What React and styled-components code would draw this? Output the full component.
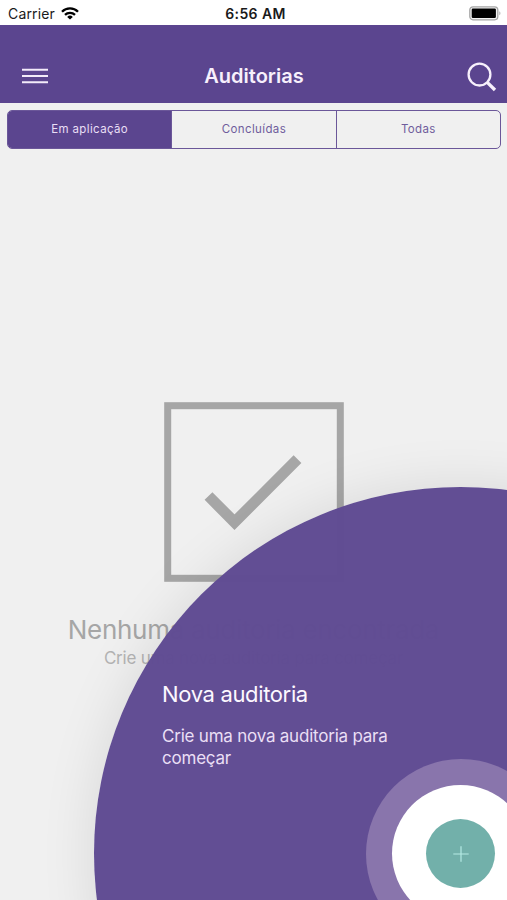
import React from 'react';
import styled, { createGlobalStyle } from 'styled-components';

const GlobalStyle = createGlobalStyle`
  * {
    box-sizing: border-box;
  }
  body {
    margin: 0;
    background-color: #f0f0f0;
    font-family: Inter, "Liberation Sans", sans-serif;
  }
`;

const Screen = styled.div`
  position: relative;
  display: flex;
  flex-direction: column;
  width: 507px;
  height: 900px;
  overflow: hidden;
  background-color: #f0f0f0;
`;

const StatusBar = styled.div`
  display: grid;
  grid-template-columns: 1fr auto 1fr;
  align-items: center;
  height: 25px;
  padding: 2px 6px 0 8px;
  background-color: #ffffff;
  color: #1a1a1a;
  font-size: 14px;
`;

const Carrier = styled.div`
  display: flex;
  align-items: center;
  gap: 6px;
  letter-spacing: 0.15px;
`;

const Time = styled.div`
  padding-left: 2px;
  font-weight: 600;
  letter-spacing: 0.4px;
`;

const Battery = styled.svg`
  justify-self: end;
`;

const Header = styled.header`
  display: grid;
  grid-template-columns: 1fr auto 1fr;
  align-items: center;
  height: 78px;
  padding: 24px 10px 0 11px;
  background-color: #5b458f;
`;

const IconButton = styled.button`
  display: flex;
  justify-self: ${({ $end }) => ($end ? 'end' : 'start')};
  padding: ${({ $end }) => ($end ? '1px 0 0' : '0 0 0 11px')};
  border: none;
  background: none;
`;

const Title = styled.h1`
  margin: 0;
  color: #f7f0fc;
  font-size: 20px;
  font-weight: 600;
  letter-spacing: 0;
`;

const Tabs = styled.div`
  display: flex;
  flex-shrink: 0;
  height: 39px;
  margin: 7px 6px 0 7px;
  border: 1px solid #6b5799;
  border-radius: 5px;
  overflow: hidden;
`;

const Tab = styled.button`
  flex: 1;
  padding: 0 0 2px;
  border: none;
  border-left: ${({ $first }) => ($first ? 'none' : '1px solid #6b5799')};
  background-color: ${({ $active }) => ($active ? '#5b458f' : 'transparent')};
  color: ${({ $active }) => ($active ? '#e9dff5' : '#6f5d9c')};
  font-family: inherit;
  font-size: 11.5px;
  letter-spacing: 0.37px;
`;

const EmptyState = styled.main`
  display: flex;
  flex-direction: column;
  align-items: center;
  padding-top: 253px;
`;

const EmptyTitle = styled.h2`
  margin: 31px 0 0;
  color: #a6a6a6;
  font-size: 26px;
  font-weight: 400;
  line-height: 34px;
  letter-spacing: -0.3px;
  white-space: nowrap;
`;

const EmptyText = styled.p`
  margin: 1px 0 0;
  color: #b4b4b4;
  font-size: 17px;
  line-height: 21px;
  letter-spacing: -0.22px;
  white-space: nowrap;
`;

const Spotlight = styled.section`
  position: absolute;
  top: 487px;
  left: 94px;
  display: grid;
  place-items: center;
  width: 733px;
  height: 733px;
  border-radius: 50%;
  background-color: rgba(96, 75, 146, 0.985);
  box-shadow: 0 0 55px rgba(0, 0, 0, 0.1);
`;

const SpotlightContent = styled.div`
  position: absolute;
  top: 193px;
  left: 68px;
  width: 250px;
`;

const SpotlightTitle = styled.h3`
  margin: 0;
  color: #fdf8ff;
  font-size: 22px;
  font-weight: 400;
  line-height: 29px;
  letter-spacing: -0.35px;
`;

const SpotlightText = styled.p`
  margin: 16px 0 0;
  color: #eadff5;
  font-size: 17px;
  line-height: 22px;
  letter-spacing: -0.22px;
`;

const Pulse = styled.div`
  display: grid;
  place-items: center;
  width: 190px;
  height: 190px;
  border-radius: 50%;
  background-color: #8975ac;
`;

const Ring = styled.div`
  display: grid;
  place-items: center;
  width: 137px;
  height: 137px;
  border-radius: 50%;
  background-color: #ffffff;
`;

const AddButton = styled.button`
  display: grid;
  place-items: center;
  width: 69px;
  height: 69px;
  padding: 0;
  border: none;
  border-radius: 50%;
  background-color: #72b0aa;
`;

const tabs = ['Em aplicação', 'Concluídas', 'Todas'];

function WifiIcon() {
  return (
    <svg width="18" height="13" viewBox="0 0 18 13" fill="none" stroke="#000000" strokeWidth="2.3">
      <path d="M1 4.7a11.3 11.3 0 0 1 16 0" />
      <path d="M4 7.9a7.1 7.1 0 0 1 10 0" />
      <path d="M9 12.6L6.2 9.9a4 4 0 0 1 5.6 0z" fill="#000000" stroke="none" />
    </svg>
  );
}

function BatteryIcon() {
  return (
    <Battery width="32" height="15" viewBox="0 0 32 15">
      <rect x="0.8" y="0.8" width="28" height="13" rx="3.2" fill="#f4f4f4" stroke="#a5a5a5" strokeWidth="1.3" />
      <rect x="2.7" y="2.6" width="24.2" height="9.4" rx="1.2" fill="#000000" />
      <path d="M30.4 5.3c1.3.7 1.3 3.3 0 4z" fill="#a5a5a5" />
    </Battery>
  );
}

function App() {
  return (
    <Screen>
      <GlobalStyle />
      <StatusBar>
        <Carrier>
          Carrier
          <WifiIcon />
        </Carrier>
        <Time>6:56 AM</Time>
        <BatteryIcon />
      </StatusBar>
      <Header>
        <IconButton aria-label="Menu">
          <svg width="26" height="18" viewBox="0 0 26 18" stroke="#f3ebfa" strokeWidth="2">
            <path d="M0 2.7h26M0 9h26M0 15.3h26" />
          </svg>
        </IconButton>
        <Title>Auditorias</Title>
        <IconButton $end aria-label="Buscar">
          <svg width="30" height="30" viewBox="0 0 30 30" fill="none" stroke="#f7f0fc">
            <circle cx="12.5" cy="12.6" r="10.9" strokeWidth="2.3" />
            <path d="M20 20.1l8 7.9" strokeWidth="3.3" />
          </svg>
        </IconButton>
      </Header>
      <Tabs>
        {tabs.map((tab, index) => (
          <Tab key={tab} $first={index === 0} $active={index === 0}>{tab}</Tab>
        ))}
      </Tabs>
      <EmptyState>
        <svg width="180" height="180" viewBox="0 0 180 180" fill="none" stroke="#a6a6a6">
          <rect x="3.7" y="3.7" width="172.6" height="172.6" strokeWidth="7" />
          <path d="M44.5 94L70.5 120.2L133.5 57.2" strokeWidth="11" />
        </svg>
        <EmptyTitle>Nenhuma auditoria encontrada</EmptyTitle>
        <EmptyText>Crie uma nova auditoria para começar</EmptyText>
      </EmptyState>
      <Spotlight>
        <SpotlightContent>
          <SpotlightTitle>Nova auditoria</SpotlightTitle>
          <SpotlightText>Crie uma nova auditoria para começar</SpotlightText>
        </SpotlightContent>
        <Pulse>
          <Ring>
            <AddButton aria-label="Nova auditoria">
              <svg width="16" height="16" viewBox="0 0 16 16" stroke="#b5eae4" strokeWidth="1.2">
                <path d="M8 0.3v15.4M0.3 8h15.4" />
              </svg>
            </AddButton>
          </Ring>
        </Pulse>
      </Spotlight>
    </Screen>
  );
}

export default App;
